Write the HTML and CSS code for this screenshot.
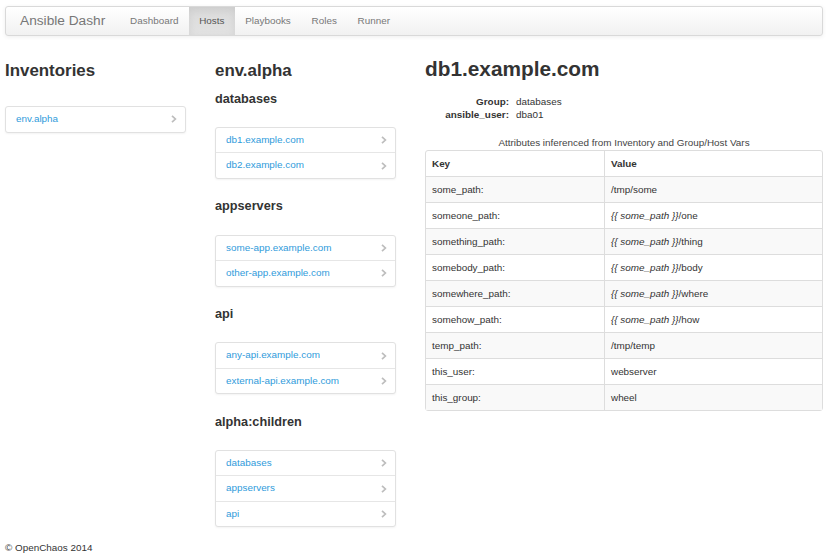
FILE: index.html
```html
<!DOCTYPE html>
<html>
<head>
<meta charset="utf-8">
<title>Ansible Dashr</title>
<link rel="stylesheet" href="styles.css">
</head>
<body>
<nav class="navbar">
  <span class="brand">Ansible Dashr</span>
  <ul class="nav">
    <li class="nav-item">Dashboard</li>
    <li class="nav-item active">Hosts</li>
    <li class="nav-item">Playbooks</li>
    <li class="nav-item">Roles</li>
    <li class="nav-item">Runner</li>
  </ul>
</nav>

<main class="content">
  <section class="col">
    <h3 class="h3">Inventories</h3>
    <ul class="list first-list">
      <li class="item"><span class="link">env.alpha</span><svg class="chev" width="6" height="8" viewBox="0 0 6 8"><polyline points="1,0.8 4.4,4 1,7.2" fill="none" stroke="#bdbdbd" stroke-width="1.7"/></svg></li>
    </ul>
  </section>

  <section class="col">
    <h3 class="h3">env.alpha</h3>
    <h4 class="h4 first-h4">databases</h4>
    <ul class="list">
      <li class="item"><span class="link">db1.example.com</span><svg class="chev" width="6" height="8" viewBox="0 0 6 8"><polyline points="1,0.8 4.4,4 1,7.2" fill="none" stroke="#bdbdbd" stroke-width="1.7"/></svg></li>
      <li class="item"><span class="link">db2.example.com</span><svg class="chev" width="6" height="8" viewBox="0 0 6 8"><polyline points="1,0.8 4.4,4 1,7.2" fill="none" stroke="#bdbdbd" stroke-width="1.7"/></svg></li>
    </ul>
    <h4 class="h4">appservers</h4>
    <ul class="list">
      <li class="item"><span class="link">some-app.example.com</span><svg class="chev" width="6" height="8" viewBox="0 0 6 8"><polyline points="1,0.8 4.4,4 1,7.2" fill="none" stroke="#bdbdbd" stroke-width="1.7"/></svg></li>
      <li class="item"><span class="link">other-app.example.com</span><svg class="chev" width="6" height="8" viewBox="0 0 6 8"><polyline points="1,0.8 4.4,4 1,7.2" fill="none" stroke="#bdbdbd" stroke-width="1.7"/></svg></li>
    </ul>
    <h4 class="h4">api</h4>
    <ul class="list">
      <li class="item"><span class="link">any-api.example.com</span><svg class="chev" width="6" height="8" viewBox="0 0 6 8"><polyline points="1,0.8 4.4,4 1,7.2" fill="none" stroke="#bdbdbd" stroke-width="1.7"/></svg></li>
      <li class="item"><span class="link">external-api.example.com</span><svg class="chev" width="6" height="8" viewBox="0 0 6 8"><polyline points="1,0.8 4.4,4 1,7.2" fill="none" stroke="#bdbdbd" stroke-width="1.7"/></svg></li>
    </ul>
    <h4 class="h4">alpha:children</h4>
    <ul class="list last-list">
      <li class="item"><span class="link">databases</span><svg class="chev" width="6" height="8" viewBox="0 0 6 8"><polyline points="1,0.8 4.4,4 1,7.2" fill="none" stroke="#bdbdbd" stroke-width="1.7"/></svg></li>
      <li class="item"><span class="link">appservers</span><svg class="chev" width="6" height="8" viewBox="0 0 6 8"><polyline points="1,0.8 4.4,4 1,7.2" fill="none" stroke="#bdbdbd" stroke-width="1.7"/></svg></li>
      <li class="item"><span class="link">api</span><svg class="chev" width="6" height="8" viewBox="0 0 6 8"><polyline points="1,0.8 4.4,4 1,7.2" fill="none" stroke="#bdbdbd" stroke-width="1.7"/></svg></li>
    </ul>
  </section>

  <section class="col">
    <h2 class="h2">db1.example.com</h2>
    <dl class="facts">
      <dt>Group:</dt><dd>databases</dd>
      <dt>ansible_user:</dt><dd>dba01</dd>
    </dl>
    <table class="vars">
      <caption>Attributes inferenced from Inventory and Group/Host Vars</caption>
      <thead>
        <tr><th class="kcol">Key</th><th>Value</th></tr>
      </thead>
      <tbody>
        <tr><td>some_path:</td><td>/tmp/some</td></tr>
        <tr><td>someone_path:</td><td><em>{{ some_path }}</em>/one</td></tr>
        <tr><td>something_path:</td><td><em>{{ some_path }}</em>/thing</td></tr>
        <tr><td>somebody_path:</td><td><em>{{ some_path }}</em>/body</td></tr>
        <tr><td>somewhere_path:</td><td><em>{{ some_path }}</em>/where</td></tr>
        <tr><td>somehow_path:</td><td><em>{{ some_path }}</em>/how</td></tr>
        <tr><td>temp_path:</td><td>/tmp/temp</td></tr>
        <tr><td>this_user:</td><td>webserver</td></tr>
        <tr><td>this_group:</td><td>wheel</td></tr>
      </tbody>
    </table>
  </section>
</main>

<footer class="footer">© OpenChaos 2014</footer>
</body>
</html>
```
FILE: styles.css
```css
* { box-sizing: border-box; }

body {
  margin: 0;
  padding-top: 6px;
  font-family: "Liberation Sans", Arial, sans-serif;
  font-size: 9.9px;
  line-height: 13.3px;
  color: #333;
  background: #fff;
}

.navbar {
  display: flex;
  align-items: stretch;
  height: 30px;
  margin: 0 3px 0 5px;
  border: 1px solid #d9d9d9;
  border-radius: 3px;
  background: linear-gradient(to bottom, #ffffff 0%, #f1f1f1 100%);
  box-shadow: inset 0 1px 0 rgba(255,255,255,.15), 0 1px 4px rgba(0,0,0,.07);
}

.brand {
  display: flex;
  align-items: center;
  padding: 0 14.5px 0 14px;
  font-size: 13.7px;
  color: #777;
}

.nav {
  display: flex;
  margin: 0;
  padding: 0;
  list-style: none;
}

.nav-item {
  display: flex;
  align-items: center;
  padding: 0 10.4px;
  color: #777;
  font-size: 9.9px;
}

.nav-item.active {
  background: linear-gradient(to bottom, #dbdbdb 0%, #e2e2e2 100%);
  box-shadow: inset 0 3px 8px rgba(0,0,0,.075);
  color: #555;
}

.content {
  display: grid;
  grid-template-columns: 181px 181px 398px;
  column-gap: 29px;
  padding-left: 5px;
  align-items: start;
}

.col { min-width: 0; }

.h3 {
  margin: 26px 0 0;
  font-size: 16.9px;
  line-height: 18px;
  font-weight: bold;
}

.h4 {
  margin: 0 0 21.3px;
  font-size: 12.7px;
  line-height: 14px;
  font-weight: bold;
}

.first-h4 { margin-top: 11.6px; }

.h2 {
  margin: 22px 0 0;
  font-size: 20.8px;
  line-height: 22.5px;
  font-weight: bold;
}

.list {
  margin: 0 0 20.4px;
  padding: 0;
  list-style: none;
  border: 1px solid #e1e1e1;
  border-radius: 3px;
  background: #fff;
  box-shadow: 0 1px 2px rgba(0,0,0,.05);
}

.first-list { margin-top: 26px; }
.last-list { margin-bottom: 0; }

.item {
  display: flex;
  align-items: center;
  justify-content: space-between;
  padding: 6px 8px 6px 10px;
  line-height: 12.5px;
}

.item + .item { border-top: 1px solid #e6e6e6; }

.link { color: #2f9bdb; }

.chev { display: block; }

.facts {
  display: grid;
  grid-template-columns: 84px 1fr;
  column-gap: 7px;
  margin: 14.2px 0 0;
}

.facts dt {
  text-align: right;
  font-weight: bold;
}

.facts dd { margin: 0; }

.vars {
  width: 100%;
  margin-top: 15px;
  border-collapse: separate;
  border-spacing: 0;
  border: 1px solid #dddddd;
  border-radius: 3px;
}

.vars caption {
  line-height: 13.3px;
  color: #444;
}

.vars th, .vars td {
  padding: 6px 6px;
  line-height: 13px;
  text-align: left;
  vertical-align: middle;
}

.vars th { font-weight: bold; line-height: 13.4px; }

.vars tbody td { border-top: 1px solid #dddddd; }

.vars th + th, .vars td + td { border-left: 1px solid #dddddd; }

.kcol { width: 178px; }

.vars tbody tr:nth-child(odd) td { background: #f9f9f9; }

.vars em { font-style: italic; }

.footer {
  margin-top: 14px;
  padding-left: 5px;
}
```
